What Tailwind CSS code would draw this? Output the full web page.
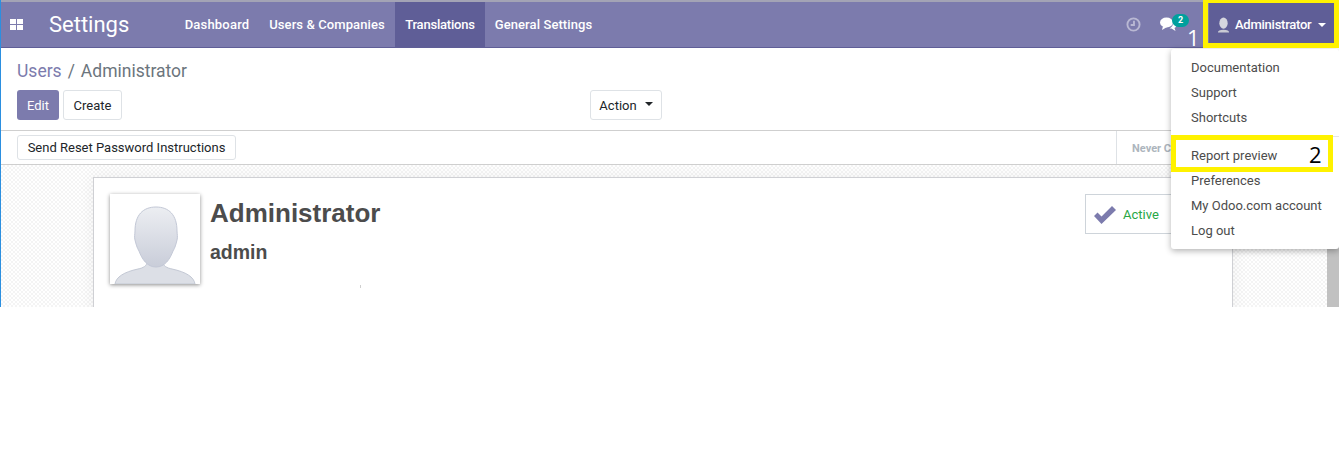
<!DOCTYPE html>
<html lang="en">
<head>
    <meta charset="UTF-8" />
    <meta name="viewport" content="width=device-width, initial-scale=1" />
    <title>Settings - Users</title>
    <script src="https://cdn.jsdelivr.net/npm/@tailwindcss/browser@4"></script>
</head>
<body class="bg-white font-['Roboto',sans-serif] overflow-hidden">
    <div class="relative w-[1339px] h-[460px] overflow-hidden">
        <div class="h-[307px] flex flex-col overflow-hidden border-l border-l-[#2b8fe0]">
            <!-- Navbar -->
            <header class="h-[48px] shrink-0 flex items-stretch bg-[#7c7bad] border-t-2 border-t-[#a3a3b5] border-b border-b-[#5f5e97] text-white text-[13px] font-medium">
                <div class="w-[31px] flex items-center justify-center">
                    <svg class="w-[13px] h-[11px]" viewBox="0 0 13 11" fill="#fff"><rect x="0" y="0" width="6" height="5"/><rect x="7" y="0" width="6" height="5"/><rect x="0" y="6" width="6" height="5"/><rect x="7" y="6" width="6" height="5"/></svg>
                </div>
                <div class="w-[80px] text-[22px] font-normal flex items-center ml-[17px] mr-[46px]">Settings</div>
                <nav class="flex items-stretch">
                    <a class="flex items-center justify-center w-[84px] tracking-[0.2px]">Dashboard</a>
                    <a class="flex items-center justify-center w-[136px] tracking-[0.1px]">Users &amp; Companies</a>
                    <a class="flex items-center justify-center w-[90px] bg-[#5f5e97] tracking-[-0.2px]">Translations</a>
                    <a class="flex items-center justify-center w-[117px] tracking-[0.1px]">General Settings</a>
                </nav>
                <div class="ml-auto flex items-stretch">
                    <div class="flex items-center mr-[19px]">
                        <svg class="w-[15px] h-[15px]" viewBox="0 0 16 16" fill="none" stroke="#b9b8d3" stroke-width="2"><circle cx="8" cy="8" r="6.500"/><path d="M8.500 4v4.500H5"/></svg>
                    </div>
                    <div class="relative flex items-center mr-[32px]">
                        <svg class="w-[17px] h-[15px]" viewBox="0 0 17 15" fill="#fff"><ellipse cx="6.500" cy="5.500" rx="6.500" ry="5"/><path d="M3 9l-1 4 5-3z"/><path d="M13.500 4c2 1 3 2.500 3 4s-1 2.500-2 3l1 3-4-2.500h-2c2-1 4-3 4-7.500z"/></svg>
                        <span class="absolute left-[12px] top-[12px] h-[13px] w-[17px] rounded-full bg-[#00a09d] text-[9px] leading-[13px] text-center font-bold">2</span>
                    </div>
                    <div class="w-[130px] flex items-center bg-[#5f5e97] pl-[8px]">
                        <svg class="w-[13px] h-[16px] mr-[5px]" viewBox="0 0 14 16"><ellipse cx="7" cy="6" rx="4.500" ry="6" fill="#d5d6de"/><path d="M1 16c0-2 2-3 6-3s6 1 6 3z" fill="#c9cad4"/></svg>
                        <span class="tracking-[-0.25px]">Administrator</span>
                        <span class="ml-[7px] w-0 h-0 border-x-[4px] border-x-transparent border-t-[4px] border-t-white"></span>
                    </div>
                </div>
            </header>

            <!-- Control panel -->
            <div class="h-[83px] shrink-0 border-b border-b-[#cfcfcf] pl-[16px] text-[13px]">
                <div class="text-[17.500px] leading-[24px] pt-[11px] h-[42px] text-[#6c757d]"><span class="text-[#7c7bad]">Users</span><span class="mx-[6px]">/</span><span>Administrator</span></div>
                <div class="flex items-center">
                    <button class="h-[30px] w-[42px] pt-[1px] rounded-[3px] bg-[#7c7bad] text-white">Edit</button>
                    <button class="h-[30px] w-[59px] pt-[1px] ml-[4px] rounded-[3px] border border-[#dee2e6] text-[#212529]">Create</button>
                    <button class="h-[30px] w-[72px] pt-[1px] ml-[468px] rounded-[3px] border border-[#dee2e6] text-[#212529] flex items-center justify-center">Action<span class="ml-[8px] mb-[3px] w-0 h-0 border-x-[4px] border-x-transparent border-t-[4px] border-t-[#212529]"></span></button>
                </div>
            </div>

            <!-- Statusbar -->
            <div class="h-[34px] shrink-0 flex items-center border-b border-b-[#cfcfcf] pl-[16px] text-[13px]">
                <button class="h-[25px] w-[219px] rounded-[3px] border border-[#dee2e6] text-[#212529]">Send Reset Password Instructions</button>
                <div class="ml-auto w-[223px] self-stretch border-l border-l-[#dee2e6] pl-[15px] pt-[3px] flex items-center text-[11px] font-bold text-[#adb5bd] whitespace-nowrap">Never C</div>
            </div>

            <!-- Sheet background -->
            <div class="grow min-h-0 flex pt-[12px] pl-[92px] bg-[repeating-conic-gradient(#f4f4f4_0_25%,#ffffff_0_50%)] bg-[length:4px_4px]">
                <div class="relative w-[1140px] h-[200px] bg-white border border-[#cfd0d4] shadow-[0_0_16px_rgba(0,0,0,0.06)] flex items-start pl-[16px] pt-[16px]">
                    <div class="w-[90px] h-[90px] shrink-0 bg-white shadow-[0_1px_4px_rgba(0,0,0,0.45)]">
                        <svg class="w-[90px] h-[90px]" viewBox="0 0 90 90">
                            <defs><linearGradient id="head" x1="0" y1="0" x2="0" y2="1"><stop offset="0" stop-color="#eceef2"/><stop offset="1" stop-color="#c9cdd9"/></linearGradient></defs>
                            <path d="M5 90c1-7 9-12 23-15 5-1 9-3 9-7h16c0 4 4 6 9 7 14 3 22 8 23 15z" fill="#dcdfe6" stroke="#c3c8d4"/>
                            <path d="M46 13c13 0 21 8 21 24 0 3 1 6 0 9-1 4-2 8-4 11-3 8-8 16-17 16s-14-8-17-16c-2-3-3-7-4-11-1-3 0-6 0-9 0-16 8-24 21-24z" fill="url(#head)" stroke="#c3c8d6"/>
                        </svg>
                    </div>
                    <div class="ml-[10px] text-[#4c4c4c] font-['Liberation_Sans',sans-serif] font-bold">
                        <h1 class="text-[26px] leading-[30px] mt-[4px]">Administrator</h1>
                        <h2 class="text-[19.500px] leading-[24px] mt-[12px]">admin</h2>
                    </div>
                    <span class="absolute left-[266px] top-[107px] w-px h-[3px] bg-[#cfcfcf]"></span>
                    <div class="absolute left-[991px] top-[16px] w-[120px] h-[40px] border border-[#ced4da] flex items-center pl-[8px] pt-[1px] text-[13px] text-[#28a745]">
                        <svg class="w-[22px] h-[18px] mr-[7px]" viewBox="0 0 22 18" fill="#7c7bad"><path d="M0 10l3.500-3.500 4 4L18 0l4 4L7.500 18z"/></svg>
                        Active
                    </div>
                </div>
            </div>
        </div>

        <!-- Scrollbar -->
        <div class="absolute left-[1327px] top-[245px] w-[12px] h-[62px] bg-[#c1c1c1]"></div>

        <!-- User dropdown -->
        <div class="absolute left-[1171px] top-[49px] w-[168px] h-[200px] bg-white rounded-[3px] shadow-[0_2px_6px_rgba(0,0,0,0.3)] pt-[6px] text-[13px] text-[#4c4c4c]">
            <a class="block pl-[20px] h-[25px] leading-[25px]">Documentation</a>
            <a class="block pl-[20px] h-[25px] leading-[25px]">Support</a>
            <a class="block pl-[20px] h-[25px] leading-[25px]">Shortcuts</a>
            <div class="h-px bg-[#e5e5e5] mt-[6px]"></div>
            <a class="block pl-[20px] h-[25px] leading-[25px] mt-[6px]">Report preview</a>
            <a class="block pl-[20px] h-[25px] leading-[25px]">Preferences</a>
            <a class="block pl-[20px] h-[25px] leading-[25px]">My Odoo.com account</a>
            <a class="block pl-[20px] h-[25px] leading-[25px]">Log out</a>
        </div>

        <!-- Annotations -->
        <div class="absolute left-[1203px] top-0 w-[136px] h-[48px] border-[5px] border-t-[3px] border-[#fff200]"></div>
        <div class="absolute left-[1171px] top-[135px] w-[162px] h-[37px] border-[5px] border-[#fff200]"></div>
        <span class="absolute left-[1187px] top-[25px] text-[22px] leading-[24px] text-white font-['Open_Sans',sans-serif]">1</span>
        <span class="absolute left-[1309px] top-[142px] text-[22px] leading-[24px] text-black font-['Open_Sans',sans-serif]">2</span>
    </div>
</body>
</html>
